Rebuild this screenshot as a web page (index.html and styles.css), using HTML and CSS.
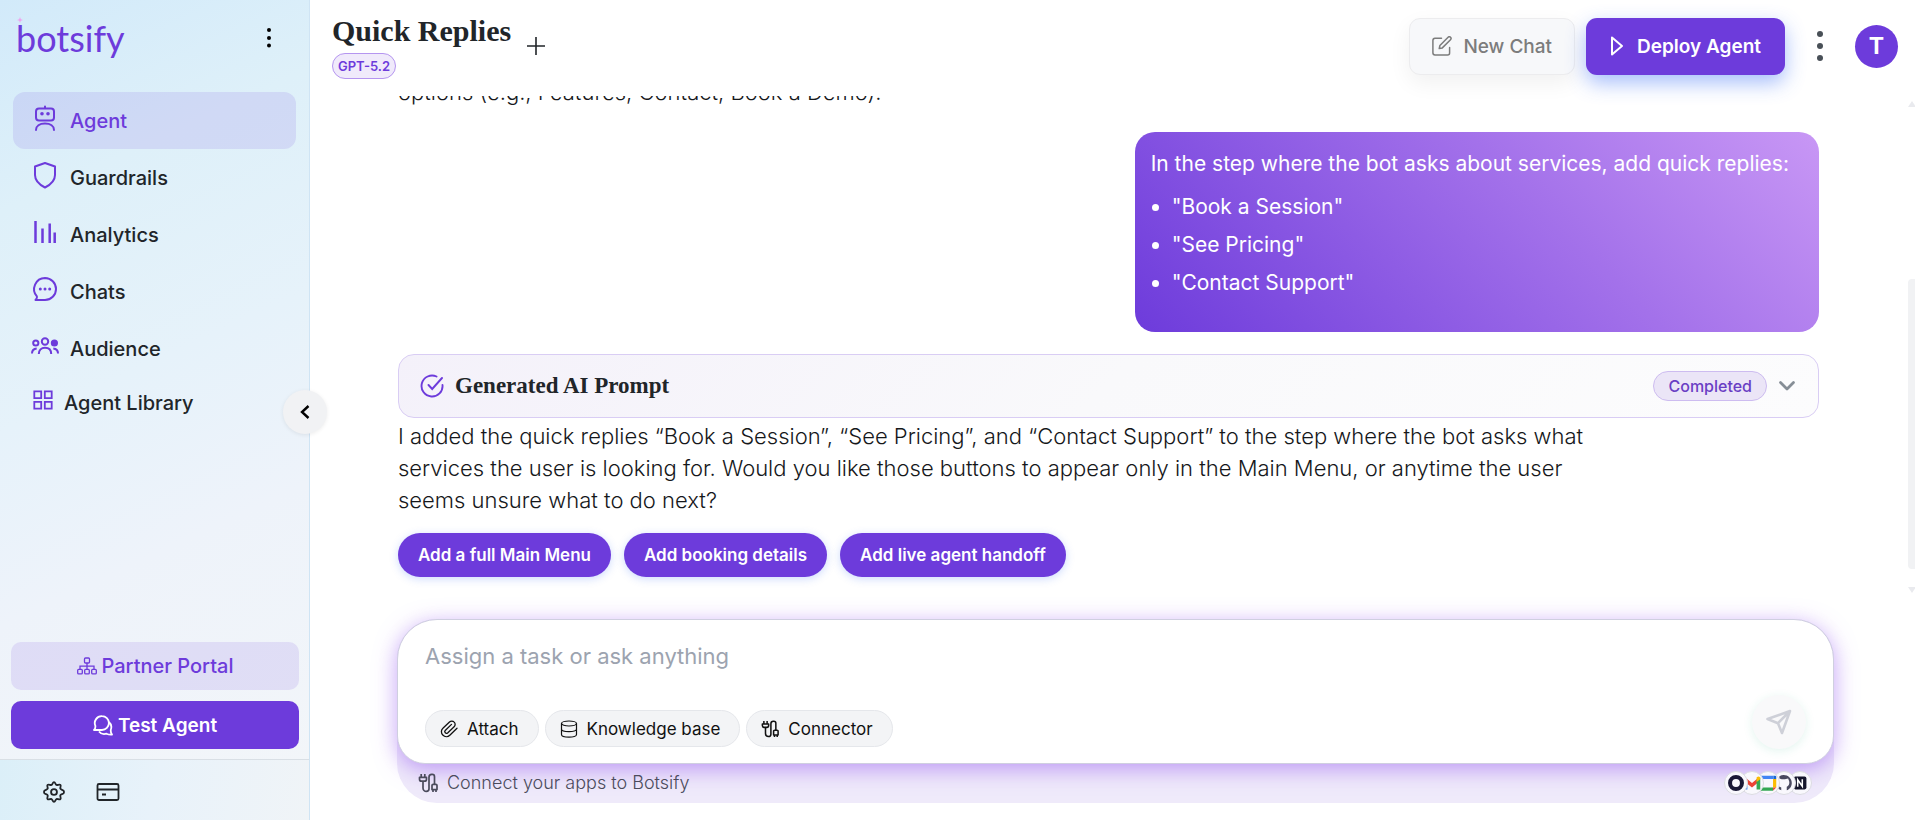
FILE: index.html
```html
<!DOCTYPE html>
<html lang="en">
<head>
<meta charset="utf-8">
<meta name="viewport" content="width=device-width, initial-scale=1">
<title>Quick Replies - Botsify</title>
<link rel="stylesheet" href="styles.css">
</head>
<body>
<svg class="sprite" aria-hidden="true">
  <symbol id="connector" viewBox="0 0 20 20">
    <path d="M3.2 1v3.2M6.8 1v3.2M1.500 4.400h7v1.800a2 2 0 0 1-2 2h-3a2 2 0 0 1-2-2zM5 8.200V15a3.400 3.400 0 0 0 3.400 3.400A2.600 2.600 0 0 0 11 15.800V4.200a2.800 2.800 0 0 1 2.800-2.800h.4A2.300 2.300 0 0 1 16.500 3.700v7.600M14 12.500a1.200 1.200 0 0 1 1.200-1.200h2.600a1.200 1.200 0 0 1 1.200 1.200v4.100h-5zM15 16.600V19M18 16.600V19" fill="none" stroke="currentColor" stroke-width="1.700" stroke-linejoin="round"/>
  </symbol>
</svg>
<div class="app">
  <aside class="sidebar">
    <div class="brand-row">
      <a class="brand" href="#">botsify<svg class="brand-spark" viewBox="0 0 6 6" aria-hidden="true"><path d="M3 0 3.800 2.200 6 3 3.800 3.800 3 6 2.200 3.800 0 3 2.200 2.200z" fill="#f0a0ee"/></svg></a>
      <button class="icon-btn" aria-label="Menu"><svg width="6" height="22" viewBox="0 0 6 22"><g fill="#000"><circle cx="3" cy="3" r="2"/><circle cx="3" cy="11" r="2"/><circle cx="3" cy="18.500" r="2"/></g></svg></button>
    </div>
    <nav class="nav">
      <a class="nav-item active" href="#"><svg width="28" height="28" viewBox="0 0 28 28" fill="none" stroke="currentColor" stroke-width="2" stroke-linecap="round"><rect x="5" y="4.500" width="18" height="12" rx="3"/><path d="M14 4V2.500M5 26c0-4 3.500-6.500 9-6.500s9 2.500 9 6.500"/><g fill="currentColor" stroke="none"><circle cx="11" cy="9.700" r="1.800"/><circle cx="17" cy="9.700" r="1.800"/></g></svg>Agent</a>
      <a class="nav-item" href="#"><svg width="28" height="28" viewBox="0 0 28 28" fill="none" stroke="currentColor" stroke-width="2" stroke-linejoin="round"><path d="M14 2 24 5.500v8.500c0 6-4 9.500-10 12.500C8 23.500 4 20 4 14V5.500z"/></svg>Guardrails</a>
      <a class="nav-item" href="#"><svg width="28" height="28" viewBox="0 0 28 28" fill="none" stroke="currentColor" stroke-width="2.500"><path d="M4.500 3v22M11.500 10.500V25M18.700 5.500V25M23.700 14.500V25"/></svg>Analytics</a>
      <a class="nav-item" href="#"><svg width="28" height="28" viewBox="0 0 28 28" fill="none" stroke="currentColor" stroke-width="2" stroke-linejoin="round"><path d="M14 3a11 11 0 1 1 0 22H4.500c1.200-1.300 1.800-2.700 1.400-3.700A11 11 0 0 1 14 3z"/><g fill="currentColor" stroke="none"><circle cx="9.300" cy="14" r="1.500"/><circle cx="14" cy="14" r="1.500"/><circle cx="18.700" cy="14" r="1.500"/></g></svg>Chats</a>
      <a class="nav-item" href="#"><svg width="28" height="28" viewBox="0 0 28 28" fill="none" stroke="currentColor" stroke-width="2"><circle cx="14" cy="9.500" r="3.200"/><circle cx="4.800" cy="11" r="2.600"/><circle cx="23.400" cy="11" r="2.600" fill="currentColor"/><path d="M7.800 22c0-4 2.500-6.300 6.200-6.300s6.200 2.300 6.200 6.300M1 21.500c0-2.700 1.500-4.700 4.700-5M27 21.500c0-2.700-1.500-4.700-4.700-5"/></svg>Audience</a>
      <a class="nav-item compact" href="#"><svg width="20" height="20" viewBox="0 0 20 20" fill="none" stroke="currentColor" stroke-width="1.800"><path d="M1.300 1.300h6.900v6.900H1.300zM11.800 1.300h6.900v6.900h-6.900zM1.300 11.800h6.900v6.900H1.300zM11.800 11.800h6.900v6.900h-6.900z"/></svg>Agent Library</a>
    </nav>
    <div class="side-actions">
      <button class="side-btn soft"><svg width="20" height="18" viewBox="0 0 20 18" fill="none" stroke="currentColor" stroke-width="1.300"><rect x="7.500" y="1" width="5" height="5" rx="1"/><rect x=".7" y="12.300" width="4.600" height="4.600" rx="1"/><rect x="7.700" y="12.300" width="4.600" height="4.600" rx="1"/><rect x="14.700" y="12.300" width="4.600" height="4.600" rx="1"/><path d="M10 6v6.300M3 12.300V9.200h14v3.100"/></svg>Partner Portal</button>
      <button class="side-btn solid"><svg width="20" height="21" viewBox="0 0 20 21" fill="none" stroke="currentColor" stroke-width="1.800" stroke-linejoin="round"><path d="M9 1.200a6.900 6.900 0 1 1 0 13.800H1c1.400-1.400 1.600-2.600 1.300-4.300A6.900 6.900 0 0 1 9 1.200zM6 16.500c2 2.600 5 3 7.500 2.200 2 .9 3.500 1.100 5.500.9-1.300-2-1.500-3-1.200-4.800.9-2.500.5-5.800-1.900-7.800"/></svg>Test Agent</button>
    </div>
    <div class="side-foot">
      <button class="icon-btn" aria-label="Settings"><svg width="22" height="22" viewBox="0 0 24 24" fill="none" stroke="currentColor" stroke-width="2" stroke-linejoin="round"><circle cx="12" cy="12" r="3.200"/><path d="M12 1.200c1.500 0 1.500 2.600 2.700 3.100s3.200-1.200 4.300-.1-.6 3-.1 4.200 3.900 1.300 3.900 2.800v1.600c0 1.500-3.400 1.600-3.900 2.800s1.200 3.100.1 4.200-3.100-.6-4.300-.1-1.200 3.100-2.700 3.100-1.500-2.600-2.700-3.100-3.200 1.200-4.300.1.600-3 .1-4.200-3.900-1.300-3.900-2.800v-1.600c0-1.500 3.400-1.600 3.900-2.800s-1.200-3.100-.1-4.200 3.100.6 4.300.1S10.500 1.200 12 1.200z"/></svg></button>
      <button class="icon-btn" aria-label="Billing"><svg width="24" height="20" viewBox="0 0 24 20" fill="none" stroke="currentColor" stroke-width="1.800"><rect x="1.500" y="2" width="21" height="16" rx="1.500"/><path d="M1.500 7.500h21M6 12.500h4"/></svg></button>
    </div>
    <button class="collapse" aria-label="Collapse sidebar"><svg width="10" height="14" viewBox="0 0 10 14" fill="none" stroke="#000" stroke-width="2.400"><path d="M8.500 1 2 7l6.500 6"/></svg></button>
  </aside>

  <main class="main">
    <header class="topbar">
      <div class="heading">
        <h1>Quick Replies</h1>
        <span class="model">GPT-5.2</span>
      </div>
      <button class="icon-btn add" aria-label="Add"><svg width="18" height="18" viewBox="0 0 18 18" stroke="currentColor" stroke-width="1.600"><path d="M9 0v18M0 9h18"/></svg></button>
      <div class="tools">
        <button class="tool ghost"><svg width="20" height="20" viewBox="0 0 20 20" fill="none" stroke="currentColor" stroke-width="1.500" stroke-linecap="round" stroke-linejoin="round"><path d="M9.500 2.300H3A2.200 2.200 0 0 0 .9 4.500v12.200A2.200 2.200 0 0 0 3 18.900h12.600a2 2 0 0 0 2-2v-5.400M7.200 12.600l.7-3.100 8.200-8.200a1.500 1.500 0 0 1 2.400 2.400l-8.200 8.200z"/></svg>New Chat</button>
        <button class="tool primary"><svg width="14" height="20" viewBox="0 0 14 20" fill="none" stroke="currentColor" stroke-width="2" stroke-linejoin="round"><path d="M2 1.500v17L12 10z"/></svg>Deploy Agent</button>
        <button class="icon-btn kebab" aria-label="More"><svg width="8" height="32" viewBox="0 0 8 32" fill="#495057"><circle cx="4" cy="4" r="3"/><circle cx="4" cy="16" r="3"/><circle cx="4" cy="28" r="3"/></svg></button>
        <button class="avatar" aria-label="Account">T</button>
      </div>
    </header>

    <section class="chat">
      <div class="thread">
        <p class="reply">options (e.g., Features, Contact, Book a Demo).</p>
        <div class="bubble">
          <p>In the step where the bot asks about services, add quick replies:</p>
          <ul>
            <li>"Book a Session"</li>
            <li>"See Pricing"</li>
            <li>"Contact Support"</li>
          </ul>
        </div>
        <div class="prompt-card">
          <svg width="24" height="24" viewBox="0 0 24 24" fill="none" stroke="#6d3bdb" stroke-width="1.900" stroke-linecap="round"><path d="M16.500 2.500A10.500 10.500 0 1 0 22.500 11M8.500 11l3.700 4L22 4"/></svg>
          <h2>Generated AI Prompt</h2>
          <span class="status">Completed</span>
          <button class="icon-btn" aria-label="Expand"><svg width="18" height="12" viewBox="0 0 18 12" fill="none" stroke="#868e96" stroke-width="2.800" stroke-linecap="round" stroke-linejoin="round"><path d="M2.500 2.500 9 9l6.500-6.500"/></svg></button>
        </div>
        <p class="reply">I added the quick replies “Book a Session”, “See Pricing”, and “Contact Support” to the step where the bot asks what services the user is looking for. Would you like those buttons to appear only in the Main Menu, or anytime the user seems unsure what to do next?</p>
        <div class="suggestions">
          <button>Add a full Main Menu</button>
          <button>Add booking details</button>
          <button>Add live agent handoff</button>
        </div>
      </div>
      <div class="scrollbar" aria-hidden="true"><span class="up"></span><span class="thumb"></span><span class="down"></span></div>
    </section>

    <form class="composer">
      <div class="input-card">
        <textarea aria-label="Message" rows="1" placeholder="Assign a task or ask anything"></textarea>
        <div class="input-row">
          <button type="button" class="chip"><svg width="18" height="18" viewBox="0 0 18 18" fill="none" stroke="currentColor" stroke-width="1.300" stroke-linecap="round"><path d="M17 8.300 9.800 15.200a5 5 0 0 1-7-.2 4.600 4.600 0 0 1 .1-6.700L9.500 2a3.300 3.300 0 0 1 4.700.1 3.200 3.200 0 0 1-.1 4.600l-6.500 6.200a1.700 1.700 0 0 1-2.400-2.400L11.500 4.400"/></svg>Attach</button>
          <button type="button" class="chip"><svg width="18" height="18" viewBox="0 0 18 18" fill="none" stroke="currentColor" stroke-width="1.200"><ellipse cx="9" cy="3.500" rx="7.500" ry="2.500"/><path d="M1.500 3.500v11c0 1.500 3.400 2.700 7.500 2.700s7.500-1.200 7.500-2.700v-11M1.500 9c0 1.500 3.400 2.700 7.500 2.700s7.500-1.200 7.500-2.700"/></svg>Knowledge base</button>
          <button type="button" class="chip"><svg width="18" height="18"><use href="#connector"/></svg>Connector</button>
          <button type="submit" class="send" aria-label="Send"><svg width="28" height="28" viewBox="0 0 28 28" fill="none" stroke="#ced0d8" stroke-width="2.600" stroke-linejoin="round"><path d="M2.500 11 25 3l-8 22-4-9.800zM13 15.200 25 3"/></svg></button>
        </div>
      </div>
      <div class="connect">
        <svg width="20" height="20" viewBox="0 0 20 20"><use href="#connector"/></svg>
        <a href="#">Connect your apps to Botsify</a>
        <span class="apps">
          <svg viewBox="0 0 24 24"><circle cx="12" cy="12" r="6.500" fill="none" stroke="#1a1836" stroke-width="4.400"/></svg>
          <svg viewBox="0 0 24 24"><path d="M7 9v10H4V7z" fill="#4285f4"/><path d="M4 5.500 12 12l6-5v5l-6 5L4 10.500z" fill="#ea4335"/><path d="M17 9l4-3v13h-4z" fill="#34a853"/><path d="M17 6c2-2 4-1 4 1v1l-4 3z" fill="#fbbc04"/></svg>
          <svg viewBox="0 0 24 24"><path d="M3 4h15v3.500H3z" fill="#4285f4"/><path d="M18 4h2a1 1 0 0 1 1 1v2.500h-3z" fill="#1967d2"/><path d="M17.500 7.500H21V17h-3.500z" fill="#fbbc04"/><path d="M3 17h14.500v3.500H3z" fill="#34a853"/><path d="M17.500 17H21l-3.500 3.500z" fill="#ea4335"/></svg>
          <svg viewBox="0 0 24 24"><path d="M7 4.500C13 1 20.500 5 20.500 12c0 4-2.500 7-5.500 8v-4c3-1 3.500-5 2-7.500l-.5-1.500L13 8H9.500L7 7zM6 15.500l3 1.500v3l-3-1.500z" fill="#4a4a60"/></svg>
          <svg viewBox="0 0 24 24"><rect x="5" y="5" width="14" height="14" rx="2" fill="#15152b"/><path d="M9.500 16V8.500l5 7V8" fill="none" stroke="#fff" stroke-width="1.700"/></svg>
        </span>
      </div>
    </form>
  </main>
</div>
</body>
</html>
```
FILE: styles.css
```css
:root {
  --violet: #6d3bdb;
  --ink: #212529;
}

* { box-sizing: border-box; }

body {
  margin: 0;
  background: #fff;
  color: var(--ink);
  font-family: Inter, "Noto Sans", sans-serif;
  font-size: 20px;
}

button, textarea { font-family: inherit; }
button { cursor: pointer; }
a { color: inherit; text-decoration: none; }
p, h1, h2, ul { margin: 0; }
svg { flex: none; display: block; }

.sprite { display: none; }

.app {
  display: grid;
  grid-template-columns: 310px minmax(0, 1fr);
  grid-template-rows: minmax(0, 1fr);
  height: 100vh;
}

.icon-btn {
  display: flex;
  align-items: center;
  justify-content: center;
  padding: 0;
  border: 0;
  background: none;
  color: inherit;
}

/* Sidebar */
.sidebar {
  position: relative;
  display: flex;
  flex-direction: column;
  border-right: 1px solid #cfe4f4;
  background: linear-gradient(155deg, #d2eafa 0%, #def0f9 22%, #e6f2fa 45%, #eef3fa 65%, #f3f6f9 100%);
}

.brand-row {
  display: flex;
  justify-content: space-between;
  align-items: center;
  height: 76px;
  padding: 0 37px 0 16px;
}

.brand {
  position: relative;
  color: var(--violet);
  font-family: Lato, sans-serif;
  font-size: 36px;
  line-height: 44px;
}

.brand-spark {
  position: absolute;
  left: 1px;
  top: 1px;
  width: 6px;
  height: 6px;
}

.nav {
  display: flex;
  flex-direction: column;
  padding: 16px 13px 0;
}

.nav-item {
  display: flex;
  align-items: center;
  gap: 11px;
  height: 57px;
  padding-left: 18px;
  border-radius: 12px;
  font-size: 20px;
  font-weight: 500;
}

.nav-item svg { margin-bottom: 6px; color: var(--violet); }
.nav-item.active { background: rgba(109, 59, 219, .12); color: var(--violet); }
.nav-item.compact { height: 52px; padding-left: 20px; }

.side-actions {
  display: flex;
  flex-direction: column;
  gap: 11px;
  margin-top: auto;
  padding: 11px 10px 10px 11px;
}

.side-btn {
  display: flex;
  align-items: center;
  justify-content: center;
  gap: 5px;
  height: 48px;
  border: 0;
  border-radius: 10px;
  font-size: 20px;
  font-weight: 500;
}

.side-btn.soft { background: rgba(109, 59, 219, .12); color: var(--violet); }
.side-btn.solid { background: var(--violet); color: #fff; font-size: 19px; font-weight: 600; }

.side-foot {
  display: flex;
  align-items: center;
  gap: 31px;
  height: 61px;
  padding: 4px 43px 0;
  border-top: 1px solid #d9dfe5;
  background: linear-gradient(100deg, #dbeff8 0%, #e8f2fa 50%, #f0f4f7 100%);
}

.collapse {
  position: absolute;
  right: -18px;
  top: 390px;
  display: flex;
  align-items: center;
  justify-content: center;
  width: 44px;
  height: 44px;
  border: 0;
  border-radius: 50%;
  background: #f1f2f4;
  box-shadow: 0 1px 4px rgba(0, 0, 0, .08);
}

/* Top bar */
.main {
  display: flex;
  flex-direction: column;
  min-width: 0;
}

.topbar {
  display: flex;
  flex: none;
  align-items: center;
  height: 92px;
  padding: 0 17px 0 22px;
}

h1, h2 {
  font-family: "Liberation Serif", serif;
  font-weight: 700;
}

h1 { font-size: 30px; line-height: 36px; }
h2 { font-size: 23px; line-height: 30px; }

.heading {
  display: flex;
  flex-direction: column;
  align-items: flex-start;
  gap: 4px;
  padding-bottom: 1px;
}

.model {
  padding: 0 5px;
  border: 1px solid #b595f0;
  border-radius: 13px;
  background: #f0eafb;
  color: var(--violet);
  font-size: 13px;
  font-weight: 600;
  line-height: 24px;
}

.add { margin-left: 16px; }

.tools {
  display: flex;
  align-items: center;
  gap: 11px;
  margin-left: auto;
}

.tool {
  display: flex;
  align-items: center;
  justify-content: center;
  gap: 11px;
  height: 57px;
  padding: 0 22px;
  border: 1px solid transparent;
  border-radius: 11px;
  font-size: 19px;
  font-weight: 500;
}

.tool.ghost {
  border-color: #ececee;
  background: #f7f8fa;
  color: #7c7c7c;
  box-shadow: 0 8px 22px rgba(0, 0, 0, .06);
}

.tool.primary {
  gap: 13px;
  padding: 0 23px;
  background: var(--violet);
  color: #fff;
  font-weight: 600;
  box-shadow: 0 8px 20px rgba(59, 110, 246, .45);
}

.kebab { width: 48px; }

.avatar {
  width: 43px;
  height: 43px;
  padding: 0;
  border: 0;
  border-radius: 50%;
  background: var(--violet);
  color: #fff;
  font-size: 23px;
  font-weight: 700;
}

/* Conversation */
.chat {
  display: flex;
  flex: 1;
  min-height: 0;
  margin-top: 4px;
}

.thread {
  display: flex;
  flex: 1;
  flex-direction: column;
  justify-content: flex-end;
  min-width: 0;
  overflow: hidden;
  padding: 0 89px 19px 88px;
}

.thread > * { flex: none; }

.reply {
  max-width: 86%;
  color: #16181b;
  font-size: 22px;
  font-weight: 300;
  line-height: 32px;
}

.bubble {
  align-self: flex-end;
  margin: 24px 0 22px;
  padding: 16px 30px 30px 16px;
  border-radius: 20px;
  background: linear-gradient(45deg, #6d3bdb 0%, #a371ea 60%, #c897f5 100%);
  color: #fff;
  font-size: 21px;
  line-height: 32px;
}

.bubble ul { padding-left: 21px; margin-top: 8px; }
.bubble li { line-height: 38px; }

.prompt-card {
  display: flex;
  align-items: center;
  gap: 11px;
  height: 64px;
  margin-bottom: 2px;
  padding: 0 22px 0 21px;
  border: 1px solid #d9cdf4;
  border-radius: 16px;
  background: linear-gradient(135deg, #f4f1fa, #f9f9fb 50%, #fcfcfd);
}

.status {
  margin-left: auto;
  padding: 0 14px;
  border: 1px solid #cdbcf0;
  border-radius: 15px;
  background: #ebe5f7;
  color: #6a3fc4;
  font-size: 16px;
  font-weight: 500;
  line-height: 28px;
}

.suggestions {
  display: flex;
  gap: 13px;
  margin-top: 17px;
}

.suggestions button {
  height: 44px;
  padding: 0 20px;
  border: 0;
  border-radius: 22px;
  background: var(--violet);
  color: #fff;
  font-size: 17px;
  font-weight: 600;
  box-shadow: 0 2px 8px rgba(59, 110, 246, .25);
}

.scrollbar {
  display: flex;
  flex-direction: column;
  align-items: center;
  width: 7px;
  padding: 5px 0 3px;
}

.scrollbar .up, .scrollbar .down {
  border: 4px solid transparent;
}

.scrollbar .up { border-top: 0; border-bottom: 6px solid #e9eaee; }
.scrollbar .down { border-bottom: 0; border-top: 6px solid #e9eaee; }

.scrollbar .thumb {
  flex: 0 0 59%;
  width: 7px;
  margin: auto 0 18px;
  border-radius: 4px 0 0 4px;
  background: #f1f2f4;
}

/* Composer */
.composer {
  margin: 23px 81px 17px 87px;
  border-radius: 40px;
  background: #efeafa;
}

.input-card {
  padding: 22px 27px 14px;
  border: 1px solid #cfcfe0;
  border-radius: 40px 40px 28px 28px;
  background: #fff;
  box-shadow: 0 5px 22px rgba(147, 84, 240, .55);
}

textarea {
  display: block;
  width: 100%;
  padding: 0;
  border: 0;
  outline: 0;
  resize: none;
  background: none;
  font-size: 22px;
  line-height: 28px;
}

textarea::placeholder { color: #9ca3af; }

.input-row {
  display: flex;
  align-items: flex-end;
  gap: 6px;
  margin-top: 25px;
}

.chip {
  display: flex;
  align-items: center;
  gap: 9px;
  height: 37px;
  margin-bottom: 2px;
  padding: 0 19px 0 14px;
  border: 1px solid #e5e7eb;
  border-radius: 19px;
  background: #f3f4f6;
  color: #111;
  font-size: 17px;
}

.send {
  display: flex;
  align-items: center;
  justify-content: center;
  width: 54px;
  height: 54px;
  margin-left: auto;
  padding: 0;
  border: 0;
  border-radius: 50%;
  background: #f9f9fa;
  box-shadow: 0 2px 10px rgba(40, 180, 130, .13);
}

.connect {
  display: flex;
  align-items: center;
  gap: 9px;
  height: 39px;
  padding: 0 22px 2px 21px;
  color: #4b4b5c;
  font-size: 18px;
  font-weight: 300;
}

.apps {
  display: flex;
  margin-left: auto;
}

.apps svg {
  position: relative;
  width: 24px;
  height: 24px;
  margin-left: -8px;
  border: 1px solid #dcdce2;
  border-radius: 50%;
  background: #f9f8fd;
}

.apps svg:first-child { z-index: 5; }
.apps svg:nth-child(2) { z-index: 4; }
.apps svg:nth-child(3) { z-index: 3; }
.apps svg:nth-child(4) { z-index: 2; }
```
